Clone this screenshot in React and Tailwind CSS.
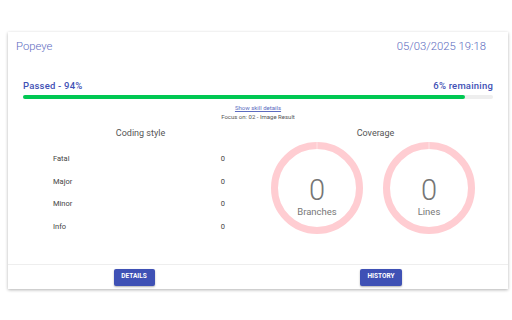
import React from "react";

function Ring({ label }) {
  return (
    <div className="relative w-[92px] h-[92px]">
      <svg width="92" height="92" viewBox="0 0 92 92" className="absolute inset-0">
        <circle cx="46" cy="46" r="42.5" fill="none" stroke="#ffcdd2" strokeWidth="7" />
        <line x1="46" y1="0" x2="46" y2="7" stroke="#ffe3e5" strokeWidth="1" />
      </svg>
      <div className="absolute inset-x-0 top-[33px] flex flex-col items-center">
        <div className="text-[29px] leading-[30px] font-light text-[#757575]">0</div>
        <div className="text-[9.5px] leading-[12px] text-[#777] mt-[1px]">{label}</div>
      </div>
    </div>
  );
}

export default function App() {
  const rows = ["Fatal", "Major", "Minor", "Info"];
  return (
    <div className="w-[512px] h-[320px] bg-white pt-[32px] px-[8px] font-['Roboto',sans-serif]">
      <div className="w-[500px] h-[257px] bg-white shadow-[0_1px_3px_rgba(0,0,0,0.3)] flex flex-col">
        <div className="flex justify-between items-start pl-[8px] pr-[22px] pt-[8px] h-[48px]">
          <div className="text-[11.3px] leading-[14px] font-light text-[#5c6bc0]">Popeye</div>
          <div className="text-[11.3px] leading-[14px] font-light text-[#5c6bc0]">05/03/2025 19:18</div>
        </div>
        <div className="px-[15px]">
          <div className="flex justify-between text-[9.5px] leading-[12px] font-medium text-[#3f51b5] tracking-[0.2px]">
            <span>Passed - 94%</span>
            <span>6% remaining</span>
          </div>
          <div className="mt-[3px] h-[4px] rounded-full bg-[#eeeeee]">
            <div className="h-[4px] rounded-full bg-[#00c853] w-[94%]"></div>
          </div>
        </div>
        <div className="flex flex-col items-center mt-[5px]">
          <div className="text-[6px] leading-[8px] text-[#5c6bc0] underline">Show skill details</div>
          <div className="text-[6px] leading-[8px] text-[#555] mt-[1px]">Focus on: 02 - Image Result</div>
        </div>
        <div className="flex px-[15px] mt-[6px] flex-1">
          <div className="w-1/2 flex flex-col items-center">
            <div className="text-[9px] leading-[12px] text-[#555]">Coding style</div>
            <div className="w-full pl-[30px] pr-[33px] mt-[14px] flex flex-col gap-[10.67px]">
              {rows.map((r) => (
                <div key={r} className="flex justify-between text-[7.5px] leading-[12px] text-[#444]">
                  <span>{r}</span>
                  <span>0</span>
                </div>
              ))}
            </div>
          </div>
          <div className="w-1/2 flex flex-col items-center">
            <div className="text-[9px] leading-[12px] text-[#555]">Coverage</div>
            <div className="flex gap-[20px] mt-[3px] ml-[-5px]">
              <Ring label="Branches" />
              <Ring label="Lines" />
            </div>
          </div>
        </div>
        <div className="border-t border-[#eeeeee] h-[25px] flex items-center">
          <div className="w-1/2 flex justify-center pl-[2px]">
            <button className="h-[17px] w-[41px] bg-[#3f51b5] text-white text-[6.5px] font-bold rounded-[2px] shadow-[0_1px_2px_rgba(0,0,0,0.3)]">DETAILS</button>
          </div>
          <div className="w-1/2 flex justify-center pr-[4px]">
            <button className="h-[17px] w-[42px] bg-[#3f51b5] text-white text-[6.5px] font-bold rounded-[2px] shadow-[0_1px_2px_rgba(0,0,0,0.3)]">HISTORY</button>
          </div>
        </div>
      </div>
    </div>
  );
}
